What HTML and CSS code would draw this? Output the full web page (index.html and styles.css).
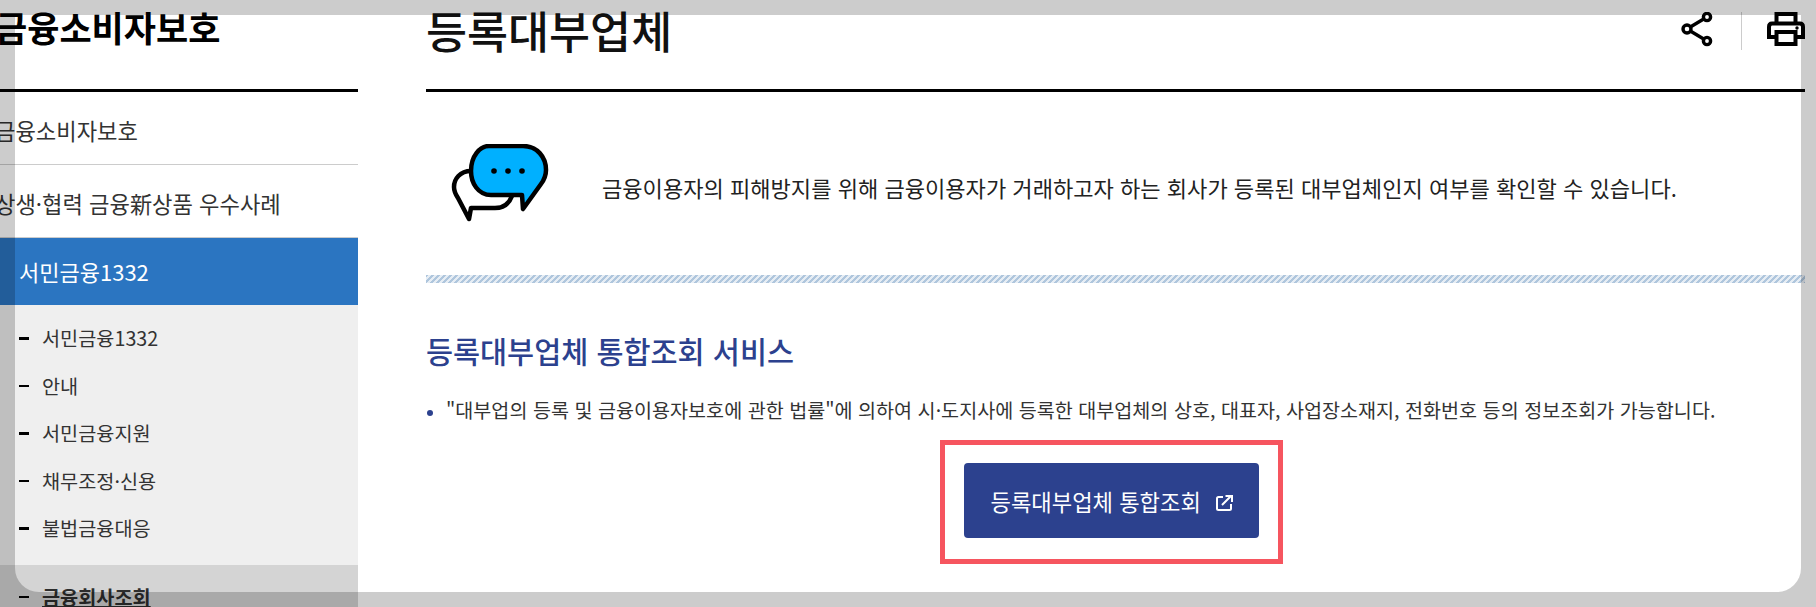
FILE: index.html
```html
<!DOCTYPE html>
<html lang="ko">
<head>
  <meta charset="UTF-8">
  <title>등록대부업체</title>
  <link rel="stylesheet" href="styles.css">
</head>
<body>

<div class="page">
  <aside class="side">
    <h2 class="side-title">금융소비자보호</h2>
    <ul class="side-menu">
      <li class="side-item">금융소비자보호</li>
      <li class="side-item">상생·협력 금융新상품 우수사례</li>
      <li class="side-item active">서민금융1332</li>
    </ul>
    <ul class="sub-menu">
      <li>서민금융1332</li>
      <li>안내</li>
      <li>서민금융지원</li>
      <li>채무조정·신용</li>
      <li>불법금융대응</li>
      <li class="current">금융회사조회</li>
    </ul>
  </aside>

  <main class="content">
    <div class="head">
      <h1>등록대부업체</h1>
      <div class="tools">
        <svg width="32" height="36" viewBox="0 0 32 36" fill="none" stroke="#000" stroke-width="3.400">
          <path d="M6 17L26 5M6 17L26 29"/>
          <circle cx="6" cy="17" r="4" fill="#fff"/>
          <circle cx="26" cy="5" r="3.600" fill="#fff"/>
          <circle cx="26" cy="29" r="3.600" fill="#fff"/>
        </svg>
        <span class="tool-line"></span>
        <svg width="38" height="36" viewBox="0 0 38 36" fill="none" stroke="#000" stroke-width="4">
          <path d="M9.500 11V2H28.500V11"/>
          <path d="M9.500 25H2V15Q2 11.500 5 11.500H33Q36 11.500 36 15V25H28.500"/>
          <path d="M9.500 20H28.500V32H9.500Z"/>
          <circle cx="30" cy="16" r="1.700" fill="#000" stroke="none"/>
        </svg>
      </div>
    </div>

    <div class="intro">
      <svg class="intro-ico" width="98" height="80" viewBox="0 0 98 80">
        <path d="M20 27C9 27 3 35 3 43C3 48 5 51 7 54L18 75L20 64H44C52 64 58 60 61 52" fill="#fff" stroke="#000" stroke-width="4.500" stroke-linejoin="round" stroke-linecap="round"/>
        <path d="M38 2H72C86 2 95 13 95 26C95 32 93 36 90 40L72 65L71 51H40C27 51 20 39 20 27C20 12 29 2 38 2Z" fill="#00b0ff" stroke="#000" stroke-width="4.500" stroke-linejoin="round"/>
        <circle cx="43" cy="27" r="2.800"/>
        <circle cx="57" cy="27" r="2.800"/>
        <circle cx="71" cy="27" r="2.800"/>
      </svg>
      <p>금융이용자의 피해방지를 위해 금융이용자가 거래하고자 하는 회사가 등록된 대부업체인지 여부를 확인할 수 있습니다.</p>
    </div>
    <div class="hatch"></div>

    <h3>등록대부업체 통합조회 서비스</h3>
    <ul class="bullets">
      <li>"대부업의 등록 및 금융이용자보호에 관한 법률"에 의하여 시·도지사에 등록한 대부업체의 상호, 대표자, 사업장소재지, 전화번호 등의 정보조회가 가능합니다.</li>
    </ul>

    <div class="btn-wrap">
      <div class="mark">
        <a class="btn" href="#">등록대부업체 통합조회
          <svg class="ext-ico" width="17" height="16" viewBox="0 0 17 16" fill="none" stroke="#fff" stroke-width="2">
            <path d="M7 2H2.500Q1 2 1 3.500V13.500Q1 15 2.500 15H13.500Q15 15 15 13.500V9"/>
            <path d="M6 10L15 1M9.500 1H16V7"/>
          </svg>
        </a>
      </div>
    </div>
  </main>
</div>

<div class="side-shade"></div>
<div class="frame"></div>

</body>
</html>
```

FILE: styles.css
```css
html, body {
  margin: 0;
  padding: 0;
  height: 607px;
  overflow: hidden;
  background-color: #fff;
}
body {
  font-family: "Noto Sans CJK KR", "Noto Sans", sans-serif;
  color: #333;
  position: relative;
}
ul {
  list-style: none;
  margin: 0;
  padding: 0;
}
.page {
  display: flex;
  margin-left: -25px;
  height: 607px;
  overflow: hidden;
}

/* left menu */
.side {
  flex: 0 0 383px;
}
.side-title {
  margin: 0;
  height: 92px;
  box-sizing: border-box;
  border-bottom: 3px solid #000;
  padding-left: 20px;
  font-size: 35px;
  line-height: 54px;
  font-weight: 700;
  color: #000;
}
.side-item {
  height: 73px;
  box-sizing: border-box;
  padding-left: 20px;
  font-size: 22.200px;
  line-height: 76px;
  border-bottom: 1px solid #ccc;
}
.side-item.active {
  height: 67px;
  line-height: 66px;
  padding-left: 44px;
  font-size: 22px;
  background-color: #2b75c1;
  color: #fff;
  border-bottom: 0;
}
.sub-menu {
  background-color: #efefef;
  padding: 9px 0 0 67px;
  height: 400px;
}
.sub-menu li {
  position: relative;
  height: 47.500px;
  font-size: 19.700px;
  line-height: 47.500px;
}
.sub-menu li::before {
  content: "";
  position: absolute;
  left: -23px;
  top: 23px;
  width: 10px;
  height: 2.600px;
  background-color: #000;
}
.sub-menu li.current {
  margin-top: 21px;
  font-weight: 700;
  text-decoration: underline;
  text-decoration-thickness: 2px;
}

/* main column */
.content {
  flex: 0 0 1379px;
  margin-left: 68px;
}
.head {
  display: flex;
  justify-content: space-between;
  height: 92px;
  box-sizing: border-box;
  border-bottom: 3px solid #000;
}
h1 {
  margin: 0;
  font-size: 44.600px;
  line-height: 60px;
  font-weight: 500;
  color: #111;
}
.tools {
  display: flex;
  align-items: flex-start;
  padding-top: 12px;
}
.tool-line {
  width: 1px;
  height: 38px;
  background-color: #ccc;
  margin: 0 25px 0 28px;
}
.intro {
  display: flex;
  align-items: center;
  height: 183px;
  padding-left: 25px;
}
.intro-ico {
  margin-right: 53px;
}
.intro p {
  margin: 7px 0 0;
  font-size: 22.070px;
  color: #222;
}
.hatch {
  height: 8px;
  background: repeating-linear-gradient(135deg, #afc6dd 0, #afc6dd 2.120px, #e6edf4 2.120px, #e6edf4 4.240px);
}
h3 {
  margin: 48px 0 0;
  font-size: 29.400px;
  line-height: 38px;
  font-weight: 500;
  color: #2c418e;
}
.bullets {
  margin-top: 26px;
}
.bullets li {
  position: relative;
  padding-left: 20px;
  font-size: 19.600px;
  line-height: 30px;
}
.bullets li::before {
  content: "";
  position: absolute;
  left: 1px;
  top: 15px;
  width: 6px;
  height: 6px;
  border-radius: 50%;
  background-color: #2c418e;
}
.btn-wrap {
  display: flex;
  justify-content: center;
  margin-top: 15px;
  padding-right: 9px;
}
.mark {
  border: 5px solid #f6555f;
  padding: 18px 19px 21px 19px;
}
.btn {
  display: flex;
  align-items: center;
  gap: 15px;
  width: 295px;
  height: 75px;
  box-sizing: border-box;
  padding-left: 27px;
  background-color: #2c418e;
  border-radius: 4px;
  color: #fff;
  font-size: 22.200px;
  white-space: nowrap;
  text-decoration: none;
}
.ext-ico {
  margin-top: 5px;
}

/* grey capture frame over the page */
.frame {
  position: absolute;
  left: 15px;
  top: 15px;
  width: 1786px;
  height: 577px;
  border-radius: 0 0 24px 24px;
  box-shadow: 0 0 0 1000px rgba(0, 0, 0, 0.2);
}
.side-shade {
  position: absolute;
  left: 0;
  top: 565px;
  width: 358px;
  height: 42px;
  background-color: rgba(0, 0, 0, 0.11);
}
```
